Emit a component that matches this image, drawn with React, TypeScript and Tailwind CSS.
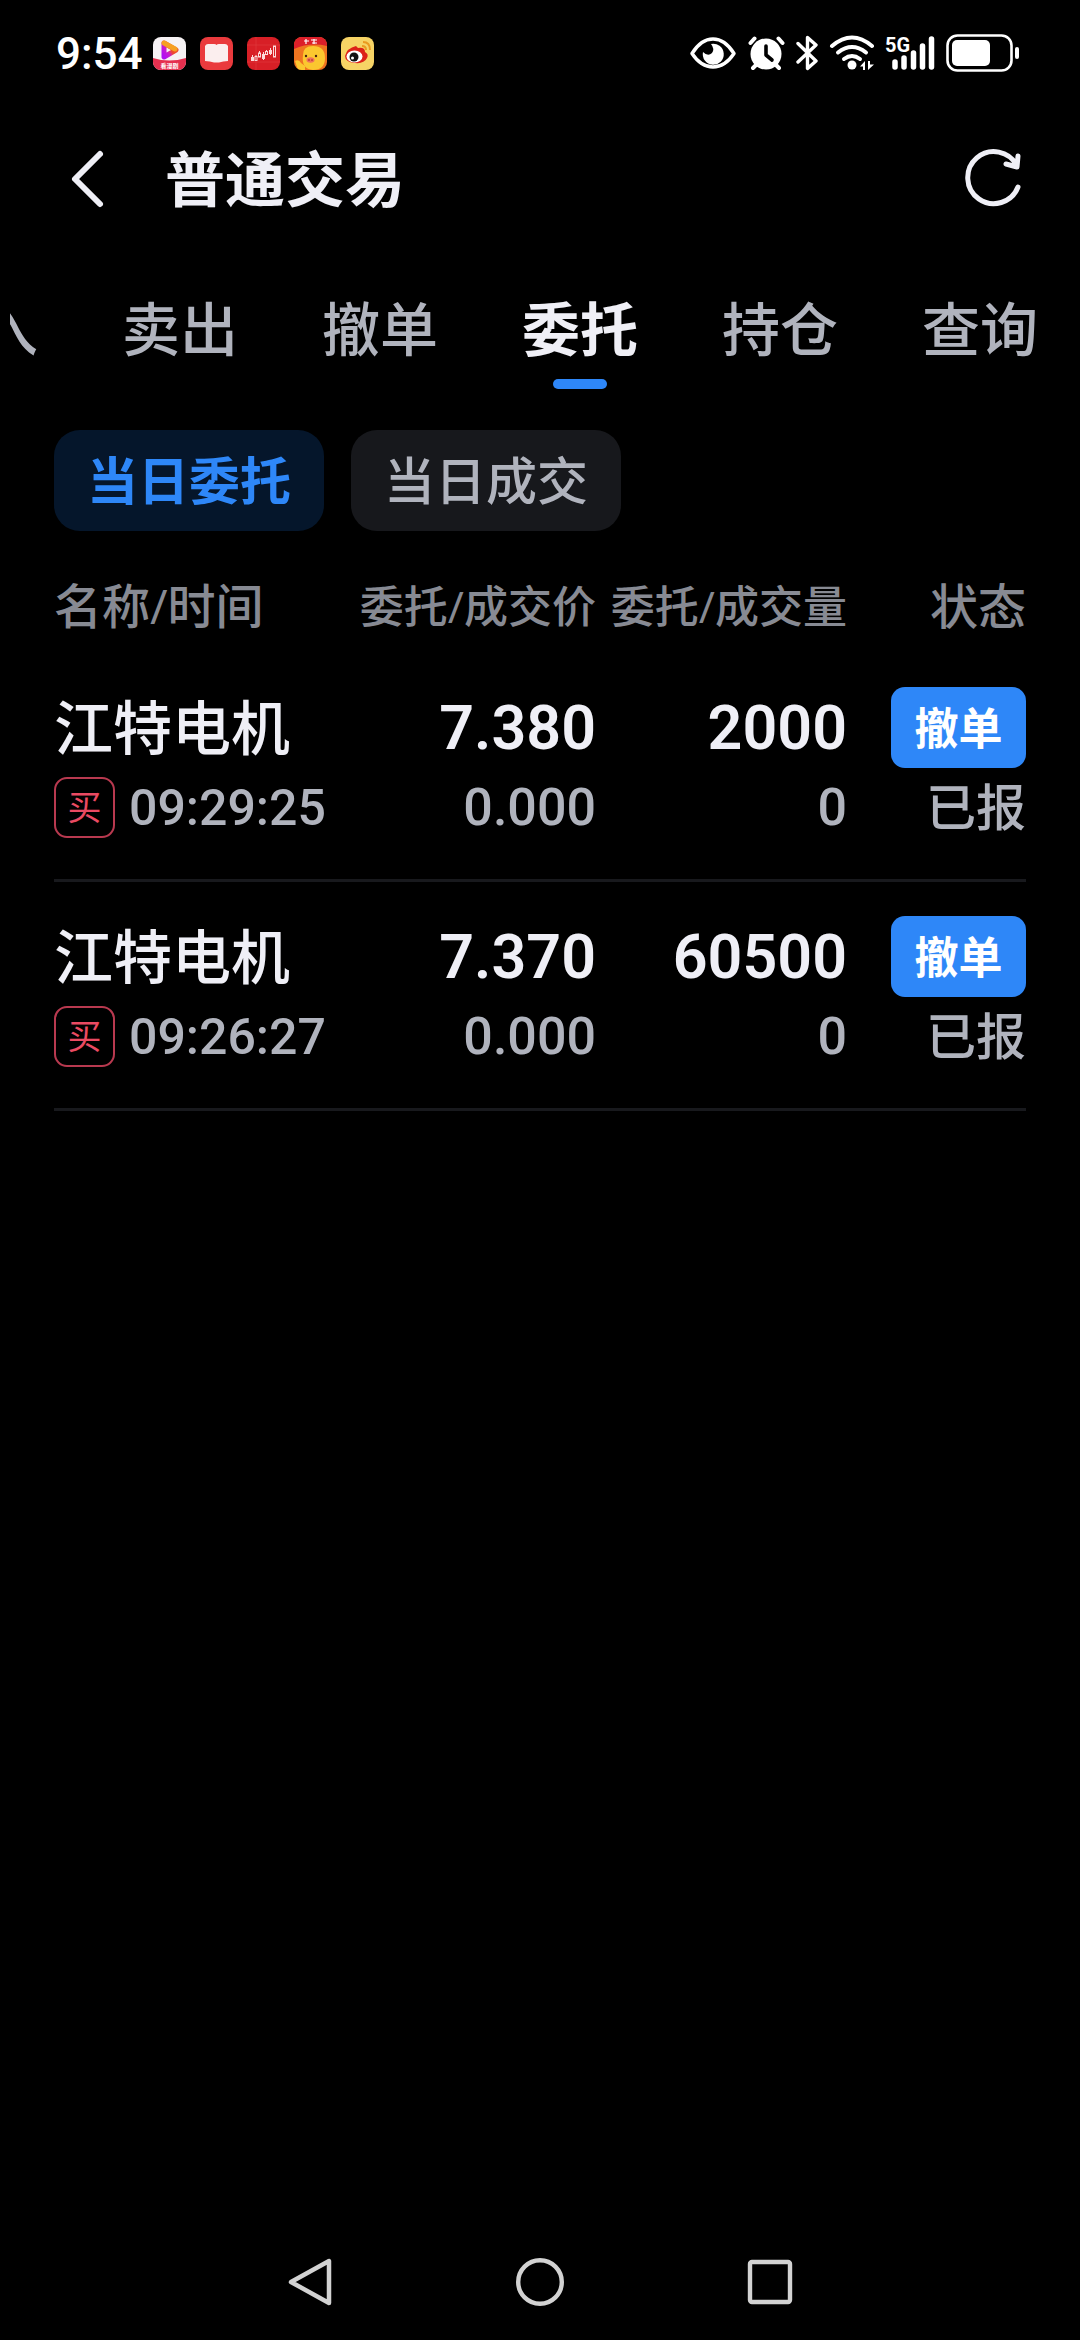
import React, { FC, ReactNode } from 'react';

type Order = {
	name: string;
	time: string;
	price: string;
	dealPrice: string;
	amount: string;
	dealAmount: string;
	status: string;
};

const orders: Order[] = [
	{
		name: '江特电机',
		time: '09:29:25',
		price: '7.380',
		dealPrice: '0.000',
		amount: '2000',
		dealAmount: '0',
		status: '已报',
	},
	{
		name: '江特电机',
		time: '09:26:27',
		price: '7.370',
		dealPrice: '0.000',
		amount: '60500',
		dealAmount: '0',
		status: '已报',
	},
];

const tabs = ['买入', '卖出', '撤单', '委托', '持仓', '查询'];

const AppIcons: FC = () => (
	<div className="flex gap-[14px]">
		<svg className="size-[33px]" viewBox="0 0 33 33">
			<defs>
				<linearGradient id="play" x1="0" y1="1" x2="1" y2="0.2">
					<stop offset="0" stopColor="#b010f4" />
					<stop offset="0.35" stopColor="#c81cd0" />
					<stop offset="0.6" stopColor="#ee4a2c" />
					<stop offset="1" stopColor="#f0502c" />
				</linearGradient>
				<clipPath id="tile">
					<rect width="33" height="33" rx="8" />
				</clipPath>
			</defs>
			<g clipPath="url(#tile)">
				<rect width="33" height="33" fill="#f6f2f4" />
				<path d="M0 21q16 5 33 0v12H0z" fill="#e5304f" />
				<path d="M11 6l12 7-12 7z" fill="none" stroke="url(#play)" strokeWidth="5" strokeLinejoin="round" />
				<path d="M11 6l11 6" stroke="#f6a021" strokeWidth="5" strokeLinecap="round" />
				<text x="16.500" y="31" fontSize="6" fontWeight="700" fill="#fff" textAnchor="middle">
					看漫剧
				</text>
			</g>
		</svg>
		<svg className="size-[33px]" viewBox="0 0 33 33">
			<rect width="33" height="33" rx="8" fill="#ea3a3d" />
			<path d="M5 9q1-2 3-2h6q2 0 2.500 1Q17 7 19 7h6q2 0 3 2v15q-5 0-9 1.500h-5Q10 24 5 24z" fill="#fbeeee" />
		</svg>
		<svg className="size-[33px]" viewBox="0 0 33 33">
			<rect width="33" height="33" rx="8" fill="#d81f26" />
			<path d="M9 0v33M0 25h33M0 8h33" stroke="#e23c40" strokeWidth="0.6" />
			<g fill="#fbdada">
				<rect x="4" y="20" width="3" height="4" />
				<rect x="15" y="17" width="3" height="5" />
				<rect x="22" y="13" width="3" height="4" />
			</g>
			<g fill="none" stroke="#fbdada" strokeWidth="1">
				<path d="M5.500 18v6M9 18v1.500M12.500 14v2M16.500 15v8M19.500 13v1.500M23.500 11v7" />
				<rect x="8" y="19.500" width="2" height="4" />
				<rect x="11.500" y="16" width="2" height="4" />
				<rect x="18.500" y="14.500" width="2" height="3" />
				<rect x="26.500" y="9" width="2" height="11" />
			</g>
		</svg>
		<svg className="size-[33px]" viewBox="0 0 33 33">
			<g clipPath="url(#tile)">
				<rect width="33" height="33" fill="#ef7420" />
				<path d="M0 0h33v9Q16 5 0 12z" fill="#dc1f2a" />
				<path d="M10 4h5M12 2v5M17 3h6M18 6h5M20 2v5" stroke="#fff" strokeWidth="1.200" />
				<path d="M9 18q0-9 10-9 12 0 12 12 0 12-12 12Q7 32 9 18z" fill="#fbc72f" />
				<path d="M1 24q4-2 6 2l4 3v4H4z" fill="#fbc72f" />
				<ellipse cx="16.500" cy="23" rx="4" ry="2.800" fill="#f0705a" />
				<path d="M15 22v2M18 22v2" stroke="#a02c24" strokeWidth="1" />
				<circle cx="12" cy="19" r="1.200" fill="#4a2010" />
				<circle cx="22" cy="19" r="1.200" fill="#4a2010" />
			</g>
		</svg>
		<svg className="size-[33px]" viewBox="0 0 33 33">
			<rect width="33" height="33" rx="8" fill="#f6d365" />
			<path d="M4 19q2-8 11-10l2 2q7-1 7 4 4 2 2 6-3 6-12 5Q4 25 4 19z" fill="#dc2118" />
			<ellipse cx="13.500" cy="19.500" rx="8" ry="6" fill="#fff" />
			<circle cx="13" cy="20" r="4.500" fill="#111" />
			<circle cx="11.500" cy="21" r="1.500" fill="#fff" />
			<path d="M22 5q7 0 7 8M21 9q4 0 4 4" fill="none" stroke="#ea9a20" strokeWidth="2" />
		</svg>
	</div>
);

const SystemIcons: FC = () => (
	<div className="flex items-center text-white">
		<svg className="w-[46px] h-[36px]" viewBox="0 0 46 36" fill="none">
			<path
				d="M2 18.500Q11 4 23 4t21 14.500Q35 32 23 32T2 18.500z"
				stroke="currentColor"
				strokeWidth="3.400"
				strokeLinejoin="round"
			/>
			<path d="M21 9a10.500 10.500 0 1 1-8 8q5 5 9 1 3-4-1-9z" fill="currentColor" />
		</svg>
		<svg className="w-[37px] h-[36px] ml-[12px]" viewBox="0 0 37 36">
			<circle cx="18" cy="19" r="15.500" fill="currentColor" />
			<path d="M2.500 8l4-4.500M34.500 8l-4-4.500M5 33l4-4M31 33l-4-4" stroke="currentColor" strokeWidth="4" strokeLinecap="round" />
			<path d="M18 11v9l6 5" stroke="#000" strokeWidth="3.600" fill="none" strokeLinecap="round" strokeLinejoin="round" />
		</svg>
		<svg className="w-[22px] h-[36px] ml-[11px]" viewBox="0 0 22 36">
			<path
				d="M2 8.500l18 17.500-8.500 7.500v-31L20 10 2 27"
				fill="none"
				stroke="currentColor"
				strokeWidth="3.400"
				strokeLinejoin="round"
				strokeLinecap="round"
			/>
		</svg>
		<svg className="w-[46px] h-[36px] ml-[11px]" viewBox="0 0 46 36">
			<g fill="none" stroke="currentColor" strokeWidth="4" strokeLinecap="round">
				<path d="M3 11q20-17 40 0" />
				<path d="M9 17.500q14-11 28 0" />
				<path d="M15 24q8-6 16 0" />
			</g>
			<circle cx="23" cy="30" r="4.500" fill="currentColor" />
			<path d="M36 26v9h-2v-3.500h-3zM39 35v-9h2v3.500h4z" fill="currentColor" />
		</svg>
		<div className="relative w-[50px] h-[36px] ml-[10px]">
			<span className="absolute left-0 top-0 text-[20px] leading-[20px] font-bold font-['Roboto',sans-serif]">
				5G
			</span>
			<svg className="w-[50px] h-[36px]" viewBox="0 0 50 36">
				<path
					d="M10 27v5M19 23v9M28.500 18v14M37.500 11v21M46.500 4v28"
					stroke="currentColor"
					strokeWidth="5.500"
					strokeLinecap="round"
				/>
			</svg>
		</div>
		<svg className="w-[74px] h-[38px] ml-[11px]" viewBox="0 0 74 38">
			<rect x="1.500" y="1.500" width="64" height="35" rx="10" fill="none" stroke="currentColor" strokeWidth="2.600" />
			<rect x="6" y="6" width="38" height="26" rx="5" fill="currentColor" />
			<rect x="69" y="13" width="4" height="12" rx="2" fill="currentColor" />
		</svg>
	</div>
);

type CellProp = {
	top: ReactNode;
	bottom: ReactNode;
	right?: boolean;
};

const Cell: FC<CellProp> = ({ top, bottom, right }) => (
	<td className="pt-[34px] pb-[37px]">
		<div className={right ? 'flex flex-col items-end gap-1' : 'flex flex-col items-start gap-1'}>
			<div className="flex h-[81px] items-center">{top}</div>
			<div className="flex h-[70px] items-center">{bottom}</div>
		</div>
	</td>
);

// Main figure on the first line, the dealt figure under it
const NumberCell: FC<{ value: string; dealt: string }> = ({ value, dealt }) => (
	<Cell
		right
		top={<span className="pt-[2px] font-['Roboto',sans-serif] text-[61px] font-semibold">{value}</span>}
		bottom={
			<span className="pt-[2px] font-['Roboto',sans-serif] text-[52px] font-medium text-[#b0b3bd]">
				{dealt}
			</span>
		}
	/>
);

const OrderRow: FC<{ order: Order }> = ({ order }) => (
	<tr className="border-b-[3px] border-[#18191d]">
		<Cell
			top={<span className="text-[59px] font-medium">{order.name}</span>}
			bottom={
				<>
					<span className="flex size-[61px] items-center justify-center rounded-[13px] border-2 border-[#b8394f] text-[34px] text-[#ea4a62]">
						买
					</span>
					<span className="ml-[14px] pt-[2px] font-['Roboto',sans-serif] text-[50px] font-medium text-[#b0b3bd]">
						{order.time}
					</span>
				</>
			}
		/>
		<NumberCell value={order.price} dealt={order.dealPrice} />
		<NumberCell value={order.amount} dealt={order.dealAmount} />
		<Cell
			right
			top={
				<button className="h-[81px] w-[135px] rounded-[14px] bg-[#2e87f8] text-[44px] font-bold text-white">
					撤单
				</button>
			}
			bottom={<span className="text-[50px] font-medium text-[#b0b3bd]">{order.status}</span>}
		/>
	</tr>
);

const App: FC = () => (
	<div className="flex min-h-screen flex-col bg-black font-['Open_Sans','Noto_Sans_CJK_SC',sans-serif] leading-none text-[#efeff6]">
		<div className="flex h-[106px] items-center justify-between pl-14 pr-[60px]">
			<div className="flex items-center gap-[10px]">
				<span className="pt-[2px] font-['Roboto',sans-serif] text-[44px] font-medium text-white">9:54</span>
				<AppIcons />
			</div>
			<SystemIcons />
		</div>

		<header className="flex h-[146px] items-center pl-[70px] pr-[56px]">
			<button aria-label="返回">
				<svg className="h-[60px] w-[36px]" viewBox="0 0 36 60">
					<path
						d="M30 5L5 30l25 25"
						fill="none"
						stroke="currentColor"
						strokeWidth="6"
						strokeLinecap="round"
						strokeLinejoin="round"
					/>
				</svg>
			</button>
			<h1 className="ml-[59px] text-[60px] font-bold">普通交易</h1>
			<button className="ml-auto" aria-label="刷新">
				<svg className="size-[60px]" viewBox="0 0 60 60">
					<path
						d="M54 38A26 26 0 1 1 53 17M54 7l-1 11-11-3"
						fill="none"
						stroke="currentColor"
						strokeWidth="5"
						strokeLinecap="round"
						strokeLinejoin="round"
					/>
				</svg>
			</button>
		</header>

		<nav className="ml-[10px] flex h-[178px] justify-end gap-[84px] overflow-hidden pr-[42px] pt-[37px]">
			{tabs.map((tab) => (
				<button
					key={tab}
					className={
						tab === '委托'
							? 'flex shrink-0 flex-col items-center text-[58px] font-bold'
							: 'flex shrink-0 flex-col items-center text-[58px] font-medium text-[#b0b3bd]'
					}
				>
					<span className="leading-[80px]">{tab}</span>
					{tab === '委托' && (
						<span className="mt-[10px] h-[10px] w-[54px] rounded-full bg-[#2e87f8]" />
					)}
				</button>
			))}
		</nav>

		<main className="px-[54px]">
			<div className="flex gap-[27px]">
				<button className="h-[101px] w-[270px] rounded-[26px] bg-[#05162b] text-[51px] font-bold text-[#2e87f8]">
					当日委托
				</button>
				<button className="h-[101px] w-[270px] rounded-[26px] bg-[#17181c] text-[51px] font-medium text-[#b0b3bd]">
					当日成交
				</button>
			</div>

			<table className="mt-[28px] w-full border-collapse">
				<thead>
					<tr className="h-[94px] whitespace-nowrap text-right text-[44px] text-[#878a93]">
						<th className="text-left text-[48px] font-medium">名称/时间</th>
						<th className="font-medium">委托/成交价</th>
						<th className="w-[251px] font-medium">委托/成交量</th>
						<th className="w-[179px] text-[48px] font-medium">状态</th>
					</tr>
				</thead>
				<tbody>
					{orders.map((order) => (
						<OrderRow key={order.time} order={order} />
					))}
				</tbody>
			</table>
		</main>

		<footer className="mt-auto grid h-[116px] grid-cols-3 items-center justify-items-center px-[18%] text-[#d2d2d2]">
			<button aria-label="后退">
				<svg className="size-[48px]" viewBox="0 0 48 48">
					<path d="M43 3v42L5 24z" fill="none" stroke="currentColor" strokeWidth="4.500" strokeLinejoin="round" />
				</svg>
			</button>
			<button aria-label="主屏幕">
				<svg className="size-[48px]" viewBox="0 0 48 48">
					<circle cx="24" cy="24" r="21.800" fill="none" stroke="currentColor" strokeWidth="4.400" />
				</svg>
			</button>
			<button aria-label="最近任务">
				<svg className="size-[48px]" viewBox="0 0 48 48">
					<rect x="4" y="4" width="40" height="40" rx="2" fill="none" stroke="currentColor" strokeWidth="4.400" />
				</svg>
			</button>
		</footer>
	</div>
);

export default App;
